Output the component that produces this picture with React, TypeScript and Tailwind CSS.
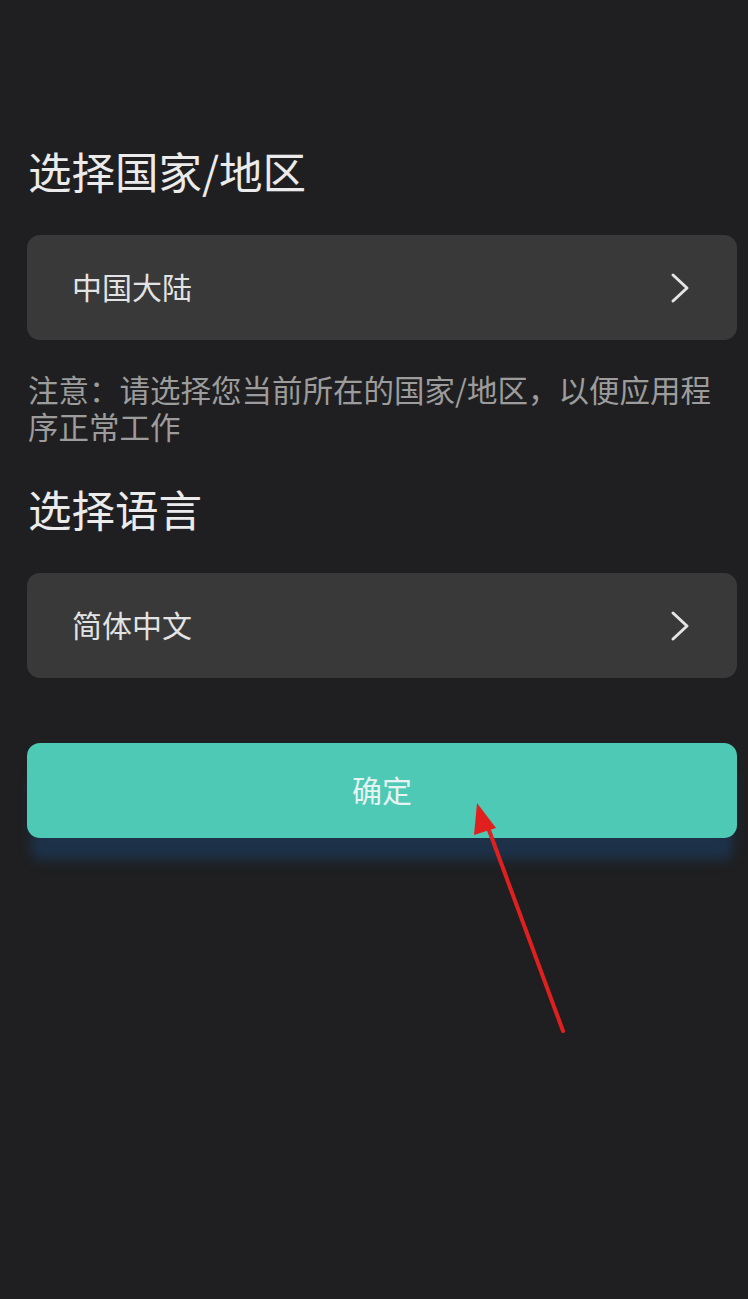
import { ReactNode } from 'react'

const FONT = "font-['Noto_Sans_CJK_SC','Noto_Sans',sans-serif]"

function Chevron() {
  return (
    <svg width="22" height="32" viewBox="0 0 22 32" fill="none">
      <path
        d="M4 3 L18 16 L4 29"
        stroke="#e4e4e4"
        strokeWidth="3"
        strokeLinecap="round"
        strokeLinejoin="round"
      />
    </svg>
  )
}

function SelectRow({ children }: { children: ReactNode }) {
  return (
    <button
      type="button"
      className="flex h-[105px] w-full items-center justify-between rounded-[13px] bg-[#393939] pl-[45px] pr-[46px] text-left"
    >
      <span className="pb-[3px] text-[30px] leading-none text-[#e3e3e3]">{children}</span>
      <Chevron />
    </button>
  )
}

export default function App() {
  return (
    <div className={`relative min-h-[1299px] w-full bg-[#1f1f21] ${FONT}`}>
      <div className="flex flex-col pl-[27px] pr-[11px] pt-[141px]">
        {/* 国家/地区 */}
        <h1 className="pl-px text-[43.5px] font-normal leading-[60px] text-[#ebebeb]">
          选择国家/地区
        </h1>
        <div className="mt-[34px]">
          <SelectRow>中国大陆</SelectRow>
        </div>
        <p className="mt-[31px] pl-px pr-[10px] text-[30.5px] leading-[37px] text-[#9c9c9c]">
          注意：请选择您当前所在的国家/地区，以便应用程序正常工作
        </p>

        {/* 语言 */}
        <h2 className="mt-[34px] pl-px text-[43.5px] font-normal leading-[60px] text-[#ebebeb]">
          选择语言
        </h2>
        <div className="mt-[34px]">
          <SelectRow>简体中文</SelectRow>
        </div>

        <button
          type="button"
          className="mt-[65px] h-[95px] w-full rounded-[13px] bg-[#4ec9b5] pb-[3px] text-[30px] text-[#e6f4f1] shadow-[0_26px_12px_-4px_#1d3249]"
        >
          确定
        </button>
      </div>

      {/* 标注箭头 */}
      <svg
        className="pointer-events-none absolute left-0 top-0"
        width="748"
        height="1299"
        viewBox="0 0 748 1299"
      >
        <line x1="563" y1="1031" x2="486" y2="822" stroke="#e0201f" strokeWidth="4" strokeLinecap="round" />
        <polygon points="477,803 496,828 474,835" fill="#e0201f" />
      </svg>
    </div>
  )
}
